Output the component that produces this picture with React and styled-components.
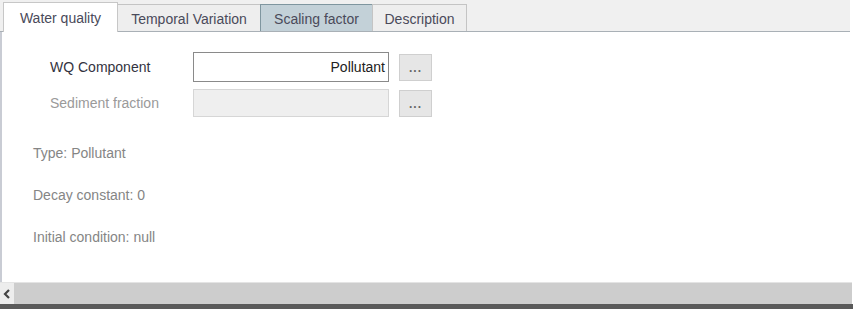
import React from "react";
import styled, { createGlobalStyle } from "styled-components";

const Global = createGlobalStyle`
  html, body { margin: 0; padding: 0; background: #ffffff; }
  body { font-family: "Liberation Sans", Arial, sans-serif; }
  #root { width: 853px; height: 309px; }
`;

const Frame = styled.div`
  width: 853px;
  height: 309px;
  display: flex;
  flex-direction: column;
  background: #fff;
  overflow: hidden;
`;

const TabStrip = styled.div`
  height: 32px;
  width: 850px;
  display: flex;
  align-items: flex-end;
  padding-left: 3px;
  box-sizing: border-box;
  background: #f0f0f0;
  border-bottom: 1px solid #a9b0b6;
  position: relative;
`;

const Tab = styled.div`
  box-sizing: border-box;
  height: ${(p) => (p.$active ? "30px" : "27px")};
  width: ${(p) => p.$w}px;
  display: flex;
  align-items: center;
  justify-content: center;
  font-size: 14px;
  color: #4a4a5a;
  background: ${(p) => (p.$active ? "#ffffff" : p.$hover ? "#c3d1d8" : "#eeeeee")};
  border: 1px solid ${(p) => (p.$active ? "#c7c7c7" : p.$hover ? "#7f969f" : "#c4c4c4")};
  border-bottom: none;
  margin-bottom: ${(p) => (p.$active ? "-1px" : "0")};
  margin-left: ${(p) => (p.$active ? "0" : "-1px")};
  padding-top: ${(p) => (p.$active ? "0" : "1px")};
  position: relative;
  z-index: ${(p) => (p.$active ? 2 : 1)};
`;

const Body = styled.div`
  flex: 1;
  border-left: 2px solid #c9ccd4;
  display: flex;
  flex-direction: column;
  padding: 20px 0 0 31px;
`;

const FormGrid = styled.div`
  display: grid;
  grid-template-columns: 143px 196px 44px;
  row-gap: 7px;
  align-items: center;
  padding-left: 17px;
`;

const Label = styled.div`
  font-size: 14px;
  color: ${(p) => (p.$disabled ? "#9a9a9a" : "#333340")};
`;

const Input = styled.div`
  box-sizing: border-box;
  height: ${(p) => (p.$disabled ? "28px" : "30px")};
  width: 196px;
  display: flex;
  align-items: center;
  justify-content: flex-end;
  padding-right: 3px;
  font-size: 14px;
  color: #222;
  background: ${(p) => (p.$disabled ? "#efefef" : "#ffffff")};
  border: 1px solid ${(p) => (p.$disabled ? "#d6d6d6" : "#8a8a8a")};
`;

const DotsButton = styled.div`
  box-sizing: border-box;
  margin-left: 10px;
  width: 33px;
  height: 27px;
  background: #e6e6e6;
  border: 1px solid #cfcfcf;
  display: flex;
  align-items: flex-end;
  justify-content: center;
  padding-bottom: 6px;
  font-size: 12px;
  font-weight: bold;
  letter-spacing: 1px;
  color: #666;
  line-height: 1;
`;

const InfoList = styled.div`
  display: flex;
  flex-direction: column;
  gap: 24px;
  margin-top: 27px;
`;

const Info = styled.div`
  font-size: 14px;
  line-height: 18px;
  color: #858585;
`;

const ScrollBar = styled.div`
  height: 21px;
  display: flex;
  background: #cdcdcd;
  border-top: 1px solid #e4e4e4;
  width: 852px;
`;

const ArrowButton = styled.div`
  width: 14px;
  background: #ededed;
  display: flex;
  align-items: center;
  justify-content: center;
`;

const BottomLine = styled.div`
  height: 5px;
  background: #5a5a5a;
`;

export default function App() {
  return (
    <Frame>
      <Global />
      <TabStrip>
        <Tab $active $w={115}>Water quality</Tab>
        <Tab $w={144}>Temporal Variation</Tab>
        <Tab $hover $w={113}>Scaling factor</Tab>
        <Tab $w={95}>Description</Tab>
      </TabStrip>
      <Body>
        <FormGrid>
          <Label>WQ Component</Label>
          <Input>Pollutant</Input>
          <DotsButton>...</DotsButton>
          <Label $disabled>Sediment fraction</Label>
          <Input $disabled />
          <DotsButton>...</DotsButton>
        </FormGrid>
        <InfoList>
          <Info>Type: Pollutant</Info>
          <Info>Decay constant: 0</Info>
          <Info>Initial condition: null</Info>
        </InfoList>
      </Body>
      <ScrollBar>
        <ArrowButton>
          <svg width="8" height="10" viewBox="0 0 8 10">
            <path d="M6 1 L2 5 L6 9" stroke="#444" strokeWidth="2.2" fill="none" />
          </svg>
        </ArrowButton>
      </ScrollBar>
      <BottomLine />
    </Frame>
  );
}
